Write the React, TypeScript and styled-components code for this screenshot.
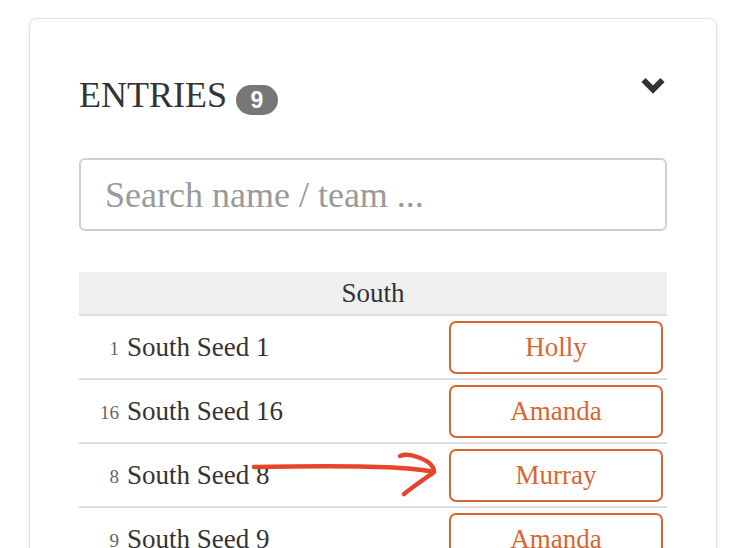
import styled, { createGlobalStyle } from "styled-components"

const GlobalStyle = createGlobalStyle`
	html, body {
		margin: 0;
		padding: 0;
		background: #fff;
	}
	body {
		font-family: "Liberation Serif", "DejaVu Serif", serif;
		color: #333;
	}
`

interface Entry {
	seed: number
	team: string
	owner: string
}

const entries: Entry[] = [
	{ seed: 1, team: "South Seed 1", owner: "Holly" },
	{ seed: 16, team: "South Seed 16", owner: "Amanda" },
	{ seed: 8, team: "South Seed 8", owner: "Murray" },
	{ seed: 9, team: "South Seed 9", owner: "Amanda" }
]

const Page = styled.div`
	position: relative;
	width: 736px;
	height: 548px;
	overflow: hidden;
	padding: 18px 0 0 29px;
	box-sizing: border-box;
`

const Card = styled.div`
	width: 688px;
	min-height: 600px;
	box-sizing: border-box;
	border: 1px solid #e2e2e2;
	border-radius: 8px;
	box-shadow: 0 1px 3px rgba(0, 0, 0, 0.12);
	padding: 52px 49px 0;
	background: #fff;
`

const Header = styled.div`
	display: flex;
	align-items: center;
	justify-content: space-between;
	height: 48px;
`

const Title = styled.h2`
	display: flex;
	align-items: center;
	margin: 0;
	font-weight: normal;
	font-size: 36px;
	line-height: 48px;
	color: #333;
`

const Badge = styled.span`
	display: inline-flex;
	align-items: center;
	justify-content: center;
	width: 42px;
	height: 30px;
	margin: 10px 0 0 9px;
	border-radius: 15px;
	background: #777;
	color: #fff;
	font-family: "Liberation Sans", Arial, sans-serif;
	font-weight: bold;
	font-size: 23px;
`

const Toggle = styled.button`
	display: flex;
	border: 0;
	background: none;
	padding: 0;
	margin: -20px 1px 0 0;
	cursor: pointer;
`

const Search = styled.input`
	display: block;
	width: 100%;
	height: 73px;
	margin-top: 39px;
	box-sizing: border-box;
	border: 2px solid #cfcfcf;
	border-radius: 6px;
	padding: 0 24px;
	font-family: "Liberation Serif", "DejaVu Serif", serif;
	font-size: 36px;
	color: #333;
	outline: none;

	&::placeholder {
		color: #9a9a9a;
	}
`

const Table = styled.div`
	margin-top: 41px;
`

const Region = styled.div`
	height: 42px;
	line-height: 42px;
	background: #efefef;
	border-bottom: 2px solid #dcdcdc;
	text-align: center;
	font-size: 27px;
	color: #333;
`

const Row = styled.div`
	display: flex;
	align-items: center;
	height: 62px;
	border-bottom: 2px solid #dcdcdc;
`

const Seed = styled.span`
	width: 40px;
	text-align: right;
	font-size: 19px;
	color: #666;
	padding-top: 4px;
`

const Team = styled.span`
	flex: 1;
	margin-left: 8px;
	font-size: 27px;
	color: #333;
`

const Owner = styled.button`
	width: 214px;
	height: 53px;
	margin-right: 4px;
	box-sizing: border-box;
	border: 2px solid #d9652f;
	border-radius: 7px;
	background: #fff;
	color: #d9652f;
	font-family: "Liberation Serif", "DejaVu Serif", serif;
	font-size: 27px;
	cursor: pointer;
`

const Annotation = styled.svg`
	position: absolute;
	left: 0;
	top: 0;
	pointer-events: none;
`

const App = () => (
	<Page>
		<GlobalStyle />
		<Card>
			<Header>
				<Title>
					ENTRIES
					<Badge>9</Badge>
				</Title>
				<Toggle aria-label="collapse">
					<svg width="26" height="18" viewBox="0 0 26 18">
						<polyline
							points="3.5,4 13,13.5 22.5,4"
							fill="none"
							stroke="#333"
							strokeWidth="6"
							strokeLinejoin="miter"
						/>
					</svg>
				</Toggle>
			</Header>

			<Search placeholder="Search name / team ..." />

			<Table>
				<Region>South</Region>
				{entries.map(e => (
					<Row key={e.seed}>
						<Seed>{e.seed}</Seed>
						<Team>{e.team}</Team>
						<Owner>{e.owner}</Owner>
					</Row>
				))}
			</Table>
		</Card>

		{/* hand-drawn arrow pointing at the Murray button */}
		<Annotation width="736" height="548" viewBox="0 0 736 548">
			<g
				fill="none"
				stroke="#e8442b"
				strokeWidth="4.5"
				strokeLinecap="round"
				strokeLinejoin="round"
			>
				<path d="M254 467 C 310 466, 370 466, 400 468 C 415 469, 425 470, 434 472" />
				<path d="M400 456 C 410 452, 428 460, 432 466 C 435 470, 434 473, 430 475 C 420 482, 410 489, 404 494" />
			</g>
		</Annotation>
	</Page>
)

export default App
